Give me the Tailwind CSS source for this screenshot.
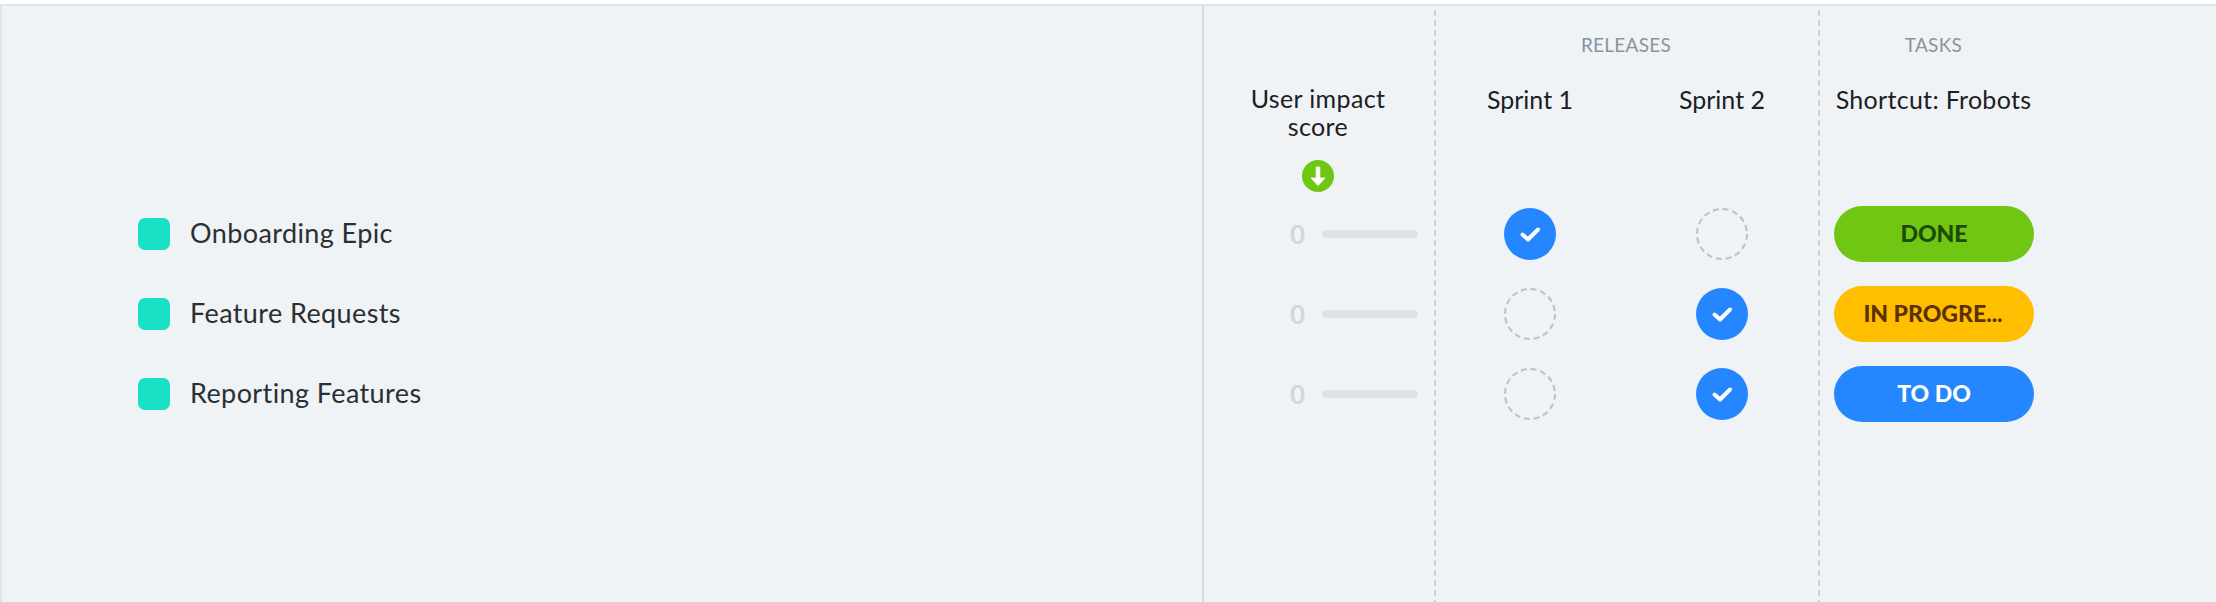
<!doctype html>
<html>
<head>
<meta charset="utf-8">
<script src="https://cdn.jsdelivr.net/npm/@tailwindcss/browser@4"></script>
</head>
<body class="m-0 overflow-hidden bg-white font-['Lato','Liberation_Sans',sans-serif]">
<div class="h-[602px] w-[2216px] pt-[4px]">
  <div class="flex h-[598px] border-t-2 border-l-[2px] border-[#dfe5ea] bg-[#eff3f6]">
    <!-- left names -->
    <section class="w-[1200px] shrink-0 pt-[187px] text-[27px] tracking-[0.4px] text-[#2a2f33]">
      <div class="flex h-[80px] items-center pl-[136px]"><span class="relative top-[1px] h-[32px] w-[32px] rounded-[7px] bg-[#18e0c4]"></span><span class="ml-[20px]">Onboarding Epic</span></div>
      <div class="flex h-[80px] items-center pl-[136px]"><span class="relative top-[1px] h-[32px] w-[32px] rounded-[7px] bg-[#18e0c4]"></span><span class="ml-[20px]">Feature Requests</span></div>
      <div class="flex h-[80px] items-center pl-[136px]"><span class="relative top-[1px] h-[32px] w-[32px] rounded-[7px] bg-[#18e0c4]"></span><span class="ml-[20px]">Reporting Features</span></div>
    </section>
    <!-- score column -->
    <section class="w-[232px] shrink-0 border-l-[2px] border-[#d8dde2]">
      <div class="flex h-[188px] flex-col items-center pt-[78px] pr-[2px]">
        <div class="w-[200px] text-center text-[25px] leading-[28px] tracking-[0.35px] text-[#1b2024]">User impact<br>score</div>
        <svg class="mt-[20px] h-[32px] w-[32px]" viewBox="0 0 32 32"><circle cx="16" cy="16" r="16" fill="#6fc714"/><path d="M14.2 7h3.6v11h5.2L16 25.6 9 18h5.2z" fill="#fff" stroke="#fff" stroke-width="0.8" stroke-linejoin="round"/></svg>
      </div>
      <div class="flex h-[80px] items-center pl-[86px]"><span class="w-[20px] text-[26px] font-bold text-[#d0d7de]">0</span><span class="ml-[12px] h-[8px] w-[96px] rounded-full bg-[#dfe3e7]"></span></div>
      <div class="flex h-[80px] items-center pl-[86px]"><span class="w-[20px] text-[26px] font-bold text-[#d0d7de]">0</span><span class="ml-[12px] h-[8px] w-[96px] rounded-full bg-[#dfe3e7]"></span></div>
      <div class="flex h-[80px] items-center pl-[86px]"><span class="w-[20px] text-[26px] font-bold text-[#d0d7de]">0</span><span class="ml-[12px] h-[8px] w-[96px] rounded-full bg-[#dfe3e7]"></span></div>
    </section>
    <!-- releases -->
    <section class="w-[384px] shrink-0 bg-[repeating-linear-gradient(to_bottom,#ccd2d8_0,#ccd2d8_6px,transparent_6px,transparent_10px)] bg-[length:2px_100%] bg-no-repeat bg-[position:0_4px]">
      <div class="pt-[29px] text-center text-[19px] leading-[20px] tracking-[0.25px] text-[#8a939e]">RELEASES</div>
      <div class="grid grid-cols-[192px_192px] pt-[30px]">
        <div class="h-[109px] text-center text-[25px] leading-[28px] text-[#1b2024]">Sprint 1</div>
        <div class="h-[109px] text-center text-[25px] leading-[28px] text-[#1b2024]">Sprint 2</div>
      </div>
      <div class="grid grid-cols-[192px_192px] grid-rows-[80px_80px_80px] place-items-center">
        <svg class="h-[52px] w-[52px]" viewBox="0 0 52 52"><circle cx="26" cy="26" r="26" fill="#2487ff"/><path d="M18.5 26.5l5.5 5 10-10" fill="none" stroke="#fff" stroke-width="4" stroke-linecap="round" stroke-linejoin="round"/></svg>
        <svg class="h-[52px] w-[52px]" viewBox="0 0 52 52"><circle cx="26" cy="26" r="25" fill="none" stroke="#b9c0c7" stroke-width="2" stroke-dasharray="6 3.8"/></svg>
        <svg class="h-[52px] w-[52px]" viewBox="0 0 52 52"><circle cx="26" cy="26" r="25" fill="none" stroke="#b9c0c7" stroke-width="2" stroke-dasharray="6 3.8"/></svg>
        <svg class="h-[52px] w-[52px]" viewBox="0 0 52 52"><circle cx="26" cy="26" r="26" fill="#2487ff"/><path d="M18.5 26.5l5.5 5 10-10" fill="none" stroke="#fff" stroke-width="4" stroke-linecap="round" stroke-linejoin="round"/></svg>
        <svg class="h-[52px] w-[52px]" viewBox="0 0 52 52"><circle cx="26" cy="26" r="25" fill="none" stroke="#b9c0c7" stroke-width="2" stroke-dasharray="6 3.8"/></svg>
        <svg class="h-[52px] w-[52px]" viewBox="0 0 52 52"><circle cx="26" cy="26" r="26" fill="#2487ff"/><path d="M18.5 26.5l5.5 5 10-10" fill="none" stroke="#fff" stroke-width="4" stroke-linecap="round" stroke-linejoin="round"/></svg>
      </div>
    </section>
    <!-- tasks -->
    <section class="flex-1 bg-[repeating-linear-gradient(to_bottom,#ccd2d8_0,#ccd2d8_6px,transparent_6px,transparent_10px)] bg-[length:2px_100%] bg-no-repeat bg-[position:0_4px]">
      <div class="w-[231px] pt-[29px] text-center text-[19px] leading-[20px] tracking-[0.3px] text-[#8a939e]">TASKS</div>
      <div class="h-[139px] w-[231px] pt-[30px] text-center text-[25px] leading-[28px] tracking-[0.3px] text-[#1b2024]">Shortcut: Frobots</div>
      <div class="flex h-[80px] items-center pl-[16px]"><div class="flex h-[56px] w-[200px] items-center justify-center rounded-full bg-[#6fc714] pb-[2px] text-[23px] font-black text-[#1f4a04]">DONE</div></div>
      <div class="flex h-[80px] items-center pl-[16px]"><div class="flex h-[56px] w-[200px] items-center justify-center rounded-full bg-[#ffbf00] pb-[2px] pr-[2px] text-[23px] font-black text-[#5c3100]">IN PROGRE...</div></div>
      <div class="flex h-[80px] items-center pl-[16px]"><div class="flex h-[56px] w-[200px] items-center justify-center rounded-full bg-[#2487ff] pb-[2px] text-[23px] font-black text-white">TO DO</div></div>
    </section>
  </div>
</div>
</body>
</html>
